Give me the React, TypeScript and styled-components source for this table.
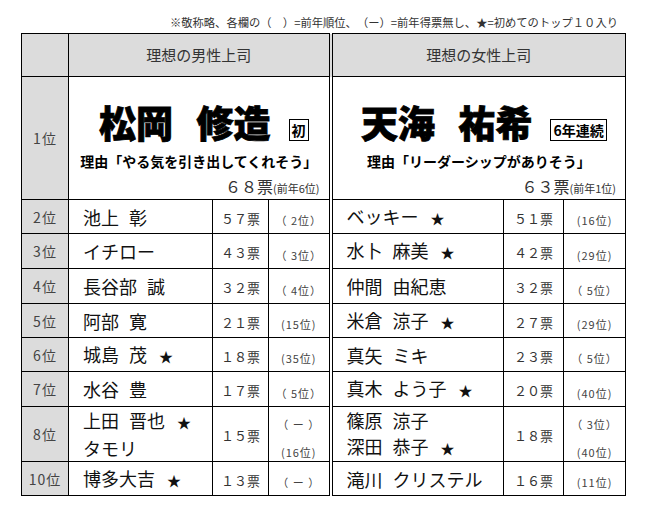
import React from 'react'
import styled, { createGlobalStyle } from 'styled-components'

type Entry = { name: string; star?: boolean }

type Row = {
  rank: string
  height: number
  men: Entry[]
  menVotes: string
  menPrev: string[]
  women: Entry[]
  womenVotes: string
  womenPrev: string[]
}

const rows: Row[] = [
  { rank: '2位', height: 34, men: [{ name: '池上 彰' }], menVotes: '５７票', menPrev: ['（ 2位）'], women: [{ name: 'ベッキー', star: true }], womenVotes: '５１票', womenPrev: ['(16位)'] },
  { rank: '3位', height: 35, men: [{ name: 'イチロー' }], menVotes: '４３票', menPrev: ['（ 3位）'], women: [{ name: '水卜 麻美', star: true }], womenVotes: '４２票', womenPrev: ['(29位)'] },
  { rank: '4位', height: 35, men: [{ name: '長谷部 誠' }], menVotes: '３２票', menPrev: ['（ 4位）'], women: [{ name: '仲間 由紀恵' }], womenVotes: '３２票', womenPrev: ['（ 5位）'] },
  { rank: '5位', height: 34, men: [{ name: '阿部 寛' }], menVotes: '２１票', menPrev: ['(15位)'], women: [{ name: '米倉 涼子', star: true }], womenVotes: '２７票', womenPrev: ['(29位)'] },
  { rank: '6位', height: 34, men: [{ name: '城島 茂', star: true }], menVotes: '１８票', menPrev: ['(35位)'], women: [{ name: '真矢 ミキ' }], womenVotes: '２３票', womenPrev: ['（ 5位）'] },
  { rank: '7位', height: 35, men: [{ name: '水谷 豊' }], menVotes: '１７票', menPrev: ['（ 5位）'], women: [{ name: '真木 よう子', star: true }], womenVotes: '２０票', womenPrev: ['(40位)'] },
  {
    rank: '8位',
    height: 54,
    men: [{ name: '上田 晋也', star: true }, { name: 'タモリ' }],
    menVotes: '１５票',
    menPrev: ['（ ー ）', '(16位)'],
    women: [{ name: '篠原 涼子' }, { name: '深田 恭子', star: true }],
    womenVotes: '１８票',
    womenPrev: ['（ 3位）', '(40位)'],
  },
  { rank: '10位', height: 34, men: [{ name: '博多大吉', star: true }], menVotes: '１３票', menPrev: ['（ ー ）'], women: [{ name: '滝川 クリステル' }], womenVotes: '１６票', womenPrev: ['(11位)'] },
]

const colWidths = [47, 144, 56, 62, 173, 60, 62]

function Names({ list }: { list: Entry[] }) {
  return (
    <>
      {list.map((e) => (
        <NameLine key={e.name}>
          {e.name}
          {e.star && <Star>★</Star>}
        </NameLine>
      ))}
    </>
  )
}

function Prev({ list }: { list: string[] }) {
  return (
    <>
      {list.map((p) => (
        <PrevLine key={p}>{p}</PrevLine>
      ))}
    </>
  )
}

export default function App() {
  return (
    <Page>
      <GlobalStyle />
      <Note>※敬称略、各欄の（　）=前年順位、（ー）=前年得票無し、★=初めてのトップ１０入り</Note>
      <Sheet>
        <colgroup>
          {colWidths.map((w, i) => (
            <Col key={i} $w={w} />
          ))}
        </colgroup>
        <tbody>
          <Tr $h={43}>
            <HeadCell />
            <HeadCell colSpan={3}>理想の男性上司</HeadCell>
            <HeadCell colSpan={3} $split>
              理想の女性上司
            </HeadCell>
          </Tr>
          <Tr $h={123}>
            <RankCell>1位</RankCell>
            <TopCell colSpan={3}>
              <BigLine>
                <BigName>松岡 修造</BigName>
                <Badge>初</Badge>
              </BigLine>
              <Reason>理由「やる気を引き出してくれそう」</Reason>
              <TopVotes>
                ６８票<small>(前年6位)</small>
              </TopVotes>
            </TopCell>
            <TopCell colSpan={3} $split>
              <BigLine>
                <BigName>天海 祐希</BigName>
                <Badge>6年連続</Badge>
              </BigLine>
              <Reason>理由「リーダーシップがありそう」</Reason>
              <TopVotes>
                ６３票<small>(前年1位)</small>
              </TopVotes>
            </TopCell>
          </Tr>
          {rows.map((r) => (
            <Tr key={r.rank} $h={r.height}>
              <RankCell>{r.rank}</RankCell>
              <NameCell>
                <Names list={r.men} />
              </NameCell>
              <VotesCell>{r.menVotes}</VotesCell>
              <PrevCell>
                <Prev list={r.menPrev} />
              </PrevCell>
              <NameCell $split>
                <Names list={r.women} />
              </NameCell>
              <VotesCell>{r.womenVotes}</VotesCell>
              <PrevCell>
                <Prev list={r.womenPrev} />
              </PrevCell>
            </Tr>
          ))}
        </tbody>
      </Sheet>
    </Page>
  )
}

const GlobalStyle = createGlobalStyle`
  html, body {
    margin: 0;
    padding: 0;
    background: #fff;
  }
  body {
    font-family: 'Noto Sans CJK JP', 'Noto Sans', sans-serif;
    color: #111;
  }
`

const Page = styled.div`
  width: 647px;
  height: 506px;
  padding-top: 15px;
  box-sizing: border-box;
`

const Note = styled.div`
  text-align: right;
  padding-right: 29px;
  font-size: 11.3px;
  line-height: 14px;
  color: #333;
  margin-bottom: 4px;
  text-spacing-trim: space-all;
  white-space: nowrap;
`

const Sheet = styled.table`
  margin-left: 21px;
  border-collapse: collapse;
  table-layout: fixed;
  width: 604px;
`

const Col = styled.col<{ $w: number }>`
  width: ${({ $w }) => $w}px;
`

const Tr = styled.tr<{ $h: number }>`
  height: ${({ $h }) => $h}px;
`

const Cell = styled.td<{ $split?: boolean }>`
  border: 1px solid #000;
  padding: 0;
  line-height: 18px;
  ${({ $split }) => $split && 'border-left: 4px double #000;'}
`

const HeadCell = styled(Cell)`
  background: #dcdcdc;
  text-align: center;
  font-size: 15px;
  color: #333;
`

const RankCell = styled(Cell)`
  background: #dcdcdc;
  text-align: center;
  font-size: 14px;
  letter-spacing: 1px;
  color: #444;
`

const TopCell = styled(Cell)`
  vertical-align: top;
  padding-top: 25px;
`

const BigLine = styled.div`
  display: flex;
  justify-content: center;
  align-items: flex-end;
  padding-left: 10px;
`

const BigName = styled.span`
  font-size: 37px;
  font-weight: 900;
  line-height: 40px;
  word-spacing: 15px;
  color: #000;
  -webkit-text-stroke: 0.8px #000;
`

const Badge = styled.span`
  margin-left: 18px;
  margin-bottom: 1px;
  border: 1px solid #000;
  padding: 0 2px;
  font-size: 14px;
  font-weight: 700;
  line-height: 20px;
  color: #000;
`

const Reason = styled.div`
  margin-top: 9px;
  text-align: center;
  font-size: 14px;
  font-weight: 700;
  line-height: 20px;
  color: #000;
`

const TopVotes = styled.div`
  margin-top: 5px;
  padding-right: 9px;
  text-align: right;
  font-size: 16px;
  line-height: 20px;
  color: #333;

  small {
    font-size: 11px;
  }
`

const NameCell = styled(Cell)`
  padding-left: 14px;
  font-size: 18px;
  word-spacing: 6px;
  color: #111;
`

const NameLine = styled.div`
  line-height: 26px;
  white-space: nowrap;
`

const Star = styled.span`
  margin-left: 12px;
  font-size: 14px;
`

const VotesCell = styled(Cell)`
  text-align: center;
  font-size: 13px;
  color: #333;
  padding-top: 4px;
`

const PrevCell = styled(Cell)`
  text-align: center;
  font-size: 11px;
  color: #444;
  padding-top: 7px;
  letter-spacing: 1px;
`

const PrevLine = styled.div`
  line-height: 18px;

  & + & {
    margin-top: 10px;
  }
`
